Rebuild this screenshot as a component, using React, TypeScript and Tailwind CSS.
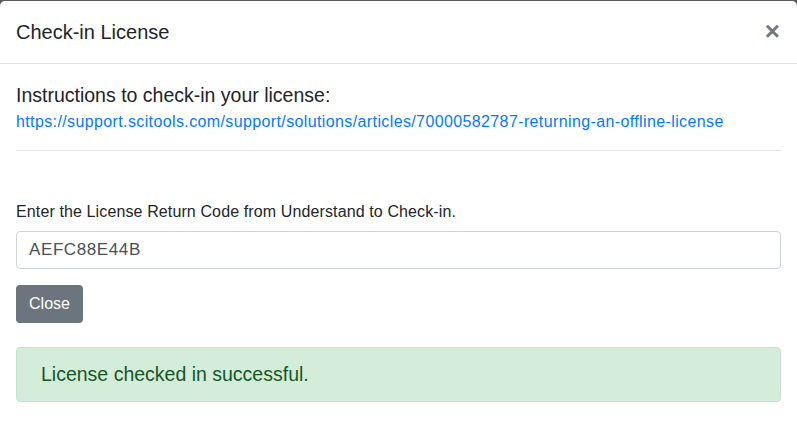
import React from "react";

export default function App() {
  const font = { fontFamily: '"Liberation Sans", Arial, sans-serif' };
  return (
    <div className="w-[797px] h-[434px] bg-[#5b5b5b] pt-[1px] overflow-hidden" style={font}>
      <div className="bg-white rounded-t-[5px] h-[433px] flex flex-col">
        <div className="h-[63px] border-b border-[#dee2e6] flex items-center justify-between pl-4 pr-4">
          <h5 className="text-[20px] leading-[30px] text-[#212529]">Check-in License</h5>
          <span className="text-[26px] leading-none font-bold text-[#777] pr-[1px] pb-[2px]">×</span>
        </div>
        <div className="px-4 pt-4 flex flex-col">
          <div className="text-[19.5px] leading-[30px] text-[#212529]">Instructions to check-in your license:</div>
          <a className="text-[16px] leading-[24px] text-[#007bff] tracking-[0.38px]">
            https://support.scitools.com/support/solutions/articles/70000582787-returning-an-offline-license
          </a>
          <hr className="mt-4 mb-[49px] border-0 border-t border-[#e5e5e5]" />
          <label className="text-[16px] leading-[24px] text-[#212529] tracking-[0.12px]">
            Enter the License Return Code from Understand to Check-in.
          </label>
          <div className="mt-[7px] h-[38px] border border-[#ced4da] rounded-[4px] flex items-center px-3 text-[17px] text-[#495057] tracking-[0.6px]">
            AEFC88E44B
          </div>
          <div className="mt-4">
            <button className="h-[38px] w-[67px] bg-[#6c757d] text-white text-[16px] rounded-[4px]">Close</button>
          </div>
          <div className="mt-6 h-[55px] bg-[#d4edda] border border-[#c3e6cb] rounded-[4px] flex items-center pl-6 text-[19.5px] text-[#155724]">
            License checked in successful.
          </div>
        </div>
      </div>
    </div>
  );
}
